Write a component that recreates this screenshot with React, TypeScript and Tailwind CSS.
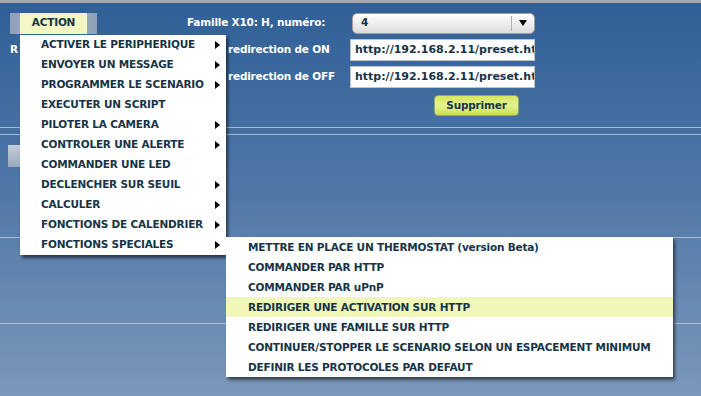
import React from 'react';

const mainItems: { label: string; sub: boolean }[] = [
  { label: 'ACTIVER LE PERIPHERIQUE', sub: true },
  { label: 'ENVOYER UN MESSAGE', sub: true },
  { label: 'PROGRAMMER LE SCENARIO', sub: true },
  { label: 'EXECUTER UN SCRIPT', sub: false },
  { label: 'PILOTER LA CAMERA', sub: true },
  { label: 'CONTROLER UNE ALERTE', sub: true },
  { label: 'COMMANDER UNE LED', sub: false },
  { label: 'DECLENCHER SUR SEUIL', sub: true },
  { label: 'CALCULER', sub: true },
  { label: 'FONCTIONS DE CALENDRIER', sub: true },
  { label: 'FONCTIONS SPECIALES', sub: true },
];

const subItems = [
  'METTRE EN PLACE UN THERMOSTAT (version Beta)',
  'COMMANDER PAR HTTP',
  'COMMANDER PAR uPnP',
  'REDIRIGER UNE ACTIVATION SUR HTTP',
  'REDIRIGER UNE FAMILLE SUR HTTP',
  'CONTINUER/STOPPER LE SCENARIO SELON UN ESPACEMENT MINIMUM',
  'DEFINIR LES PROTOCOLES PAR DEFAUT',
];

const Arrow = () => (
  <span className="w-0 h-0 border-y-[4px] border-y-transparent border-l-[5px] border-l-black" />
);

const UrlInput = () => (
  <div className="w-[185px] h-[22px] bg-white border border-[#c0c0c0] flex items-center overflow-hidden">
    <span className="ml-[4px] whitespace-nowrap text-[#173447] text-[11px] tracking-normal">
      http://192.168.2.11/preset.htm
    </span>
  </div>
);

export default function App() {
  return (
    <div
      className="relative w-[701px] h-[396px] overflow-hidden bg-gradient-to-b from-[#2f5f97] via-[#5179a8] to-[#7c97b9] text-[10.5px] tracking-[-0.2px] font-bold"
      style={{ fontFamily: '"DejaVu Sans", Verdana, sans-serif' }}
    >
      <div className="h-[3px] bg-[#a8a8a8]" />

      {/* form */}
      <div className="flex flex-col">
        <div className="flex items-center h-[22px] mt-[9px]">
          <div className="ml-[10px] w-[87px] h-[21px] flex bg-gradient-to-r from-[#8f9fb6] via-[#b9c3d0] to-[#8f9fb6]">
            <div className="mx-[10px] flex-1 bg-[#f2f7c4] flex items-center justify-center text-[#173447]">
              ACTION
            </div>
          </div>
          <div className="w-[255px] pl-[90px] text-white whitespace-nowrap">Famille X10: H, numéro:</div>
          <div className="w-[183px] h-[21px] rounded-[5px] bg-gradient-to-b from-white to-[#dcdcdc] border border-[#a0a0a0] flex items-center">
            <span className="ml-[8px] flex-1 text-[#173447]">4</span>
            <span className="w-px h-[15px] bg-[#b0b0b0]" />
            <span className="mx-[7px] w-0 h-0 border-x-[4px] border-x-transparent border-t-[6px] border-t-black" />
          </div>
        </div>

        <div className="flex items-center h-[22px] mt-[5px]">
          <span className="w-[228px] pl-[10px] text-white">R</span>
          <span className="w-[122px] text-white whitespace-nowrap">redirection de ON</span>
          <UrlInput />
        </div>

        <div className="flex items-center h-[22px] mt-[5px]">
          <span className="w-[228px]" />
          <span className="w-[122px] text-white whitespace-nowrap">redirection de OFF</span>
          <UrlInput />
        </div>

        <div className="flex h-[22px] mt-[7px]">
          <button className="ml-[434px] w-[85px] h-[21px] rounded-[4px] border border-[#9aa07a] bg-gradient-to-b from-[#d5e85a] via-[#e6f290] to-[#c8e04a] text-[#173447] font-bold">
            Supprimer
          </button>
        </div>

        <div className="mt-[10px] h-px bg-[#c3ccd8]/80" />
        <div className="mt-[6px] h-px bg-[#c3ccd8]/80" />

        <div className="mt-[10px] ml-[8px] w-[60px] h-[22px] bg-gradient-to-b from-[#c7cfd9] to-[#98a9bf]" />

        <div className="mt-[70px] h-px bg-[#c3ccd8]/80" />
        <div className="mt-[85px] h-px bg-[#c3ccd8]/80" />
      </div>

      {/* main menu */}
      <div className="absolute left-[20px] top-[35px] w-[206px] bg-white shadow-[2px_3px_3px_rgba(0,0,0,0.55)] text-[#173447]">
        {mainItems.map((it) => (
          <div key={it.label} className="h-[20px] flex items-center pl-[21px] pr-[6px]">
            <span className="flex-1 whitespace-nowrap">{it.label}</span>
            {it.sub && <Arrow />}
          </div>
        ))}
      </div>

      {/* submenu */}
      <div className="absolute left-[226px] top-[237px] w-[447px] bg-white shadow-[2px_3px_3px_rgba(0,0,0,0.55)] text-[#173447]">
        {subItems.map((s, i) => (
          <div
            key={s}
            className={`h-[20px] flex items-center pl-[22px] pt-[2px] whitespace-nowrap ${i === 3 ? 'bg-[#f0f7b8]' : ''}`}
          >
            {s}
          </div>
        ))}
      </div>
    </div>
  );
}
